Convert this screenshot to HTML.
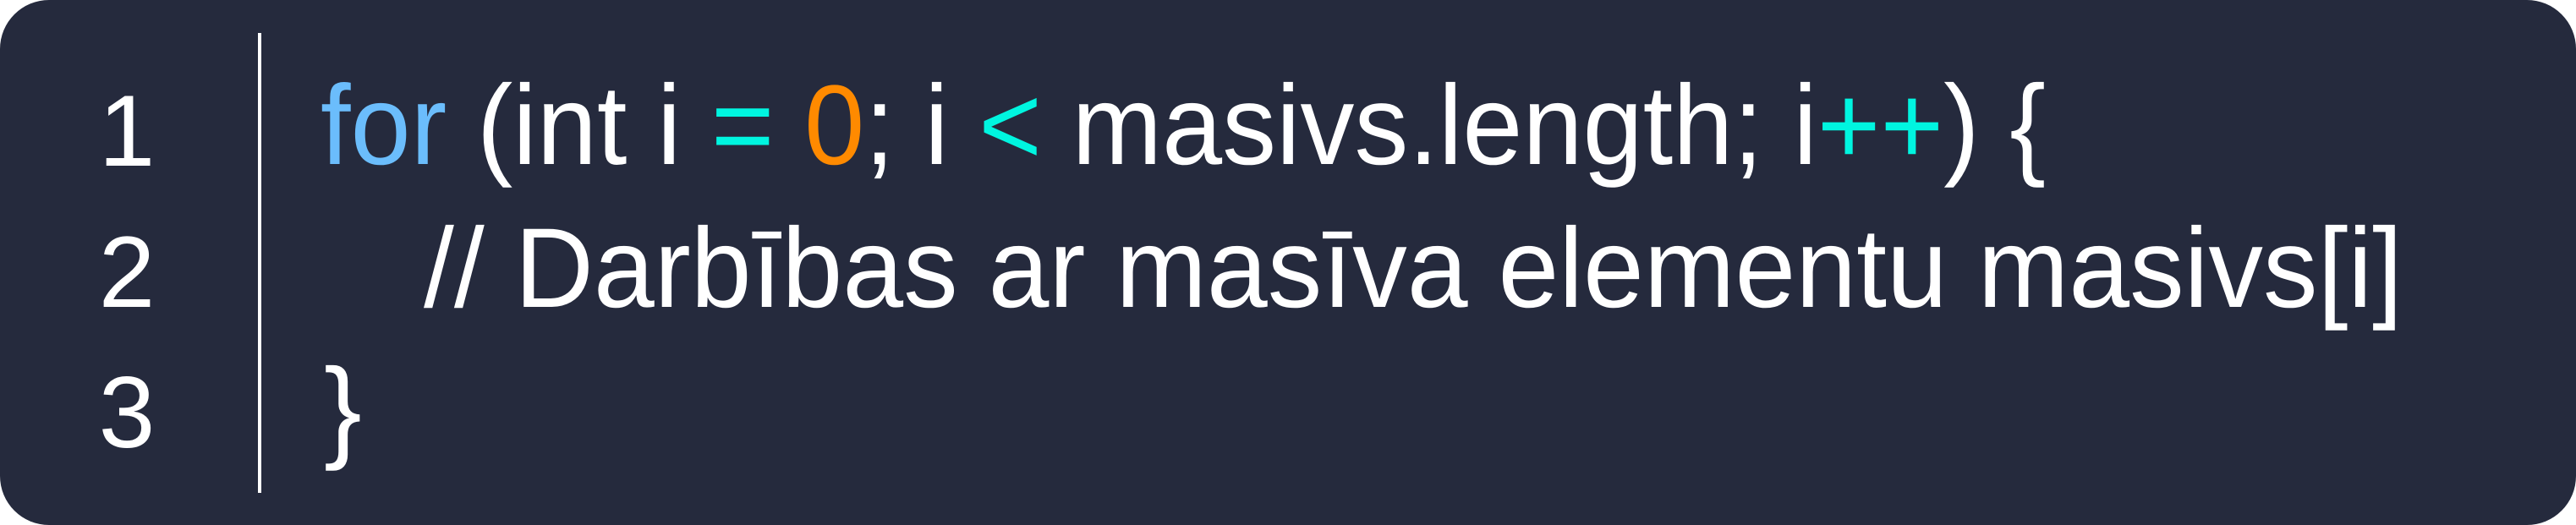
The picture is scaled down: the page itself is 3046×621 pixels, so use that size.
<!DOCTYPE html>
<html><head><meta charset="utf-8"><style>
html,body{margin:0;padding:0;background:#fff;}
body{width:3046px;height:621px;overflow:hidden;}
</style></head><body>
<svg width="3046" height="621" viewBox="0 0 3046 621" xmlns="http://www.w3.org/2000/svg" style="display:block">
<rect x="0" y="0" width="3046" height="621" rx="58" ry="58" fill="#252a3d"/>
<rect x="305" y="39" width="4" height="544" fill="#ffffff"/>
<g font-family="Liberation Sans, sans-serif" font-size="134" fill="#ffffff">
<text x="150" y="196" text-anchor="middle" font-size="120">1</text>
<text x="150" y="363" text-anchor="middle" font-size="120">2</text>
<text x="150" y="529" text-anchor="middle" font-size="120">3</text>
<text x="379" y="194" textLength="2040" lengthAdjust="spacingAndGlyphs"><tspan fill="#6bbdfc">for</tspan> (int i <tspan fill="#00f5e0">=</tspan> <tspan fill="#ff8a00">0</tspan>; i <tspan fill="#00f5e0">&lt;</tspan> masivs.length; i<tspan fill="#00f5e0">++</tspan>) {</text>
<text x="501" y="363" textLength="2340" lengthAdjust="spacingAndGlyphs">// Darbības ar masīva elementu masivs[i]</text>
<text x="383" y="529">}</text>
</g>
</svg>
</body></html>
